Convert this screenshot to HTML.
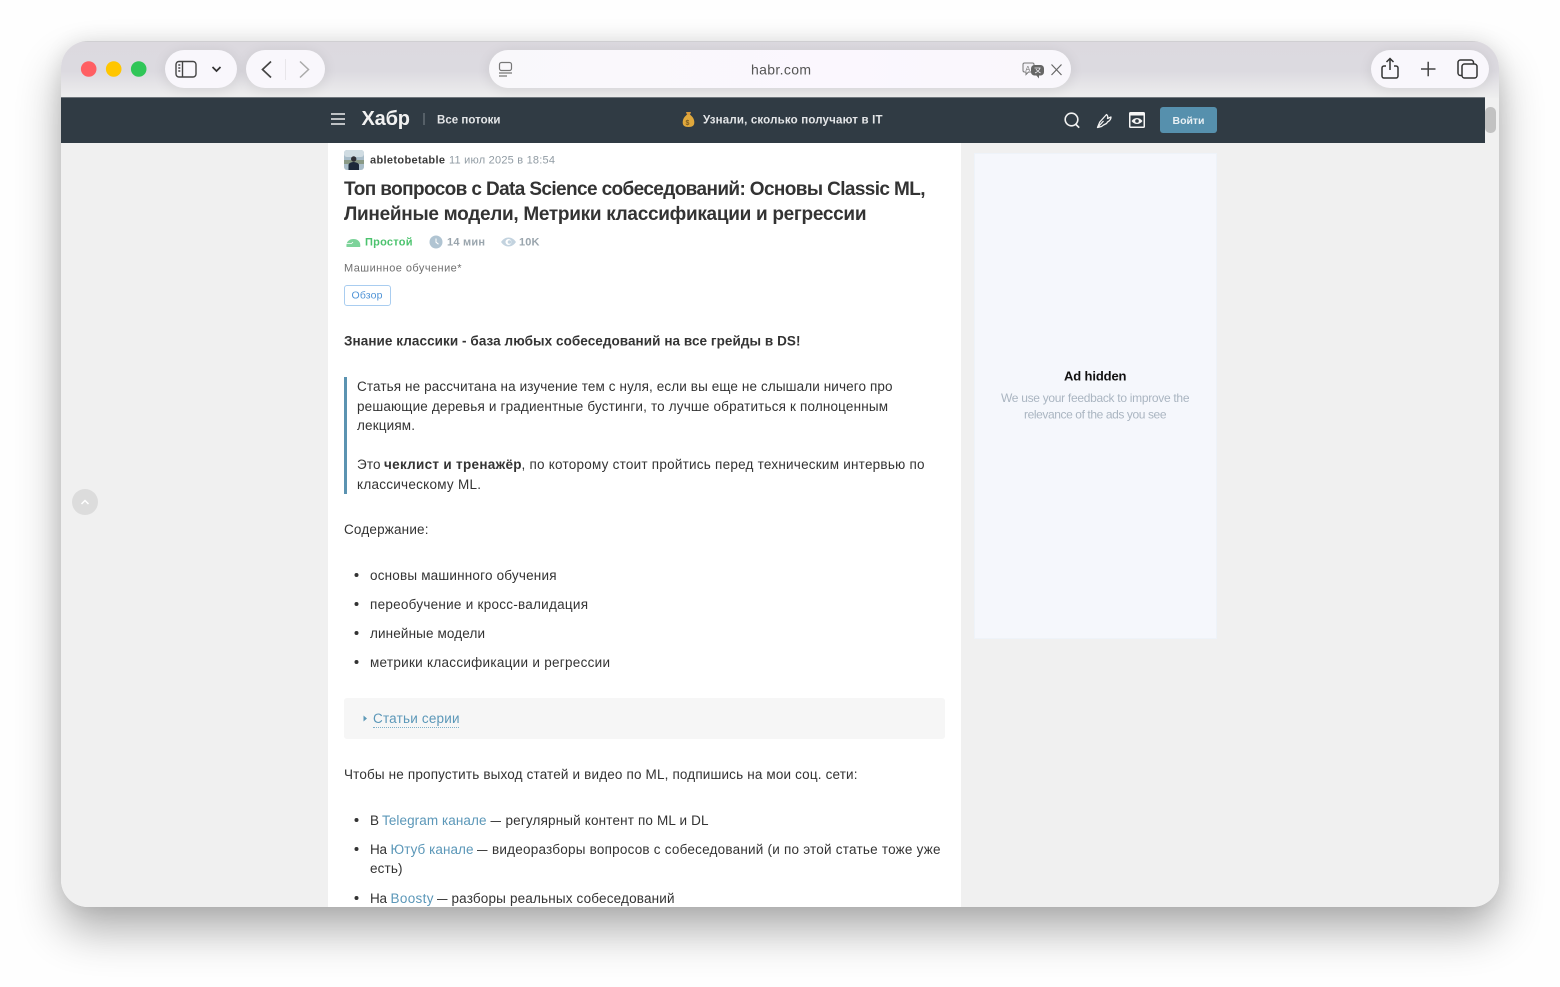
<!DOCTYPE html>
<html lang="ru"><head><meta charset="utf-8"><title>habr.com</title>
<style>
html,body{margin:0;padding:0;width:1560px;height:987px;overflow:hidden;background:#fefefe}
#shadow{position:absolute;left:61px;top:41px;width:1438px;height:866px;border-radius:27px;box-shadow:0 24px 44px rgba(0,0,0,.31),0 0 20px rgba(0,0,0,.09)}
#win{position:absolute;left:61px;top:41px;width:1438px;height:866px;border-radius:27px;overflow:hidden;background:#f0f0f0}
#top{position:absolute;left:0;top:0;width:1438px;height:57px;background:linear-gradient(#dcd9df 0,#dcdae0 52%,#e6e5e8 78%,#eeeeee 100%);border-top:1px solid #d0cfd2;box-sizing:border-box}
#hdr{position:absolute;left:0;top:56px;width:1424px;height:46px;background:#303b44;border-top:1px solid #6f767c;box-sizing:border-box}
#art{position:absolute;left:267px;top:101.500px;width:633px;height:765px;background:#fff}
#ad{position:absolute;left:913px;top:112px;width:243px;height:486px;background:#f5f7fc;border:1px solid #eef3f9;box-sizing:border-box}
.pill{position:absolute;top:9px;height:38px;border-radius:19px;background:#f9f7fc;box-shadow:0 2px 14px rgba(0,0,0,.09)}
svg{position:absolute;left:0;top:0;width:1560px;height:987px}
text{font-family:"Liberation Sans",sans-serif;fill:#333}
.b{font-size:13.5px}
.a{fill:#5b97b8;font-size:13.5px}
.g{fill:#909ba3;font-size:11px}
#t{filter:blur(.35px)}
</style></head><body>
<div id="shadow"></div>
<div id="win">
<div id="top"></div>
<div class="pill" style="left:104px;width:72px"></div>
<div class="pill" style="left:185px;width:79px"></div>
<div class="pill" style="left:428px;width:582px;background:linear-gradient(90deg,#f9f8fb,#fbf7fe 60%,#f9f7fc)"></div>
<div class="pill" style="left:1310px;width:118px"></div>
<div id="hdr"></div>
<div id="art"></div>
<div id="ad"></div>
<div style="position:absolute;left:1424px;top:66px;width:11px;height:26px;border-radius:5px;background:#c2c2c2"></div>
<div style="position:absolute;left:283px;top:657px;width:601px;height:41px;border-radius:3px;background:#f6f6f6"></div>
<div style="position:absolute;left:283px;top:336px;width:3px;height:117px;background:#5b93b1"></div>
<div style="position:absolute;left:283px;top:244px;width:47px;height:21px;border:1px solid #a9cdf0;border-radius:3px;box-sizing:border-box;background:#fff"></div>
<div style="position:absolute;left:312px;top:686px;width:86px;border-top:1px dotted #7fb0c8"></div>
<div style="position:absolute;left:11px;top:448px;width:26px;height:26px;border-radius:50%;background:#dcdcdc"></div>
</div>
<svg id="s" viewBox="0 0 1560 987" xmlns="http://www.w3.org/2000/svg">
<defs><clipPath id="c"><rect x="61" y="41" width="1438" height="866"/></clipPath></defs>
<g id="t" clip-path="url(#c)">
<!-- traffic lights -->
<circle cx="88.700" cy="69" r="7.800" fill="#ff5f63"/><circle cx="113.700" cy="69" r="7.800" fill="#ffc600"/><circle cx="138.700" cy="69" r="7.800" fill="#30c658"/>
<!-- sidebar icon -->
<g fill="none" stroke="#444" stroke-width="1.400"><rect x="176" y="61.500" width="20" height="15.500" rx="3"/><path d="M182.500 61.500V77"/><path d="M178.300 65h2M178.300 68h2M178.300 71h2"/><path d="M212.500 67l4 4 4-4" stroke-width="1.700" stroke="#333"/></g>
<path d="M271 61.500l-8.500 8 8.500 8" fill="none" stroke="#444" stroke-width="1.700"/>
<path d="M300 61.500l8.500 8-8.500 8" fill="none" stroke="#aaa" stroke-width="1.500"/>
<path d="M285.500 59v21" stroke="#e8e6ea" stroke-width="1"/>
<!-- reader -->
<g fill="none" stroke="#777" stroke-width="1.200"><rect x="499.500" y="62.500" width="12" height="8" rx="2"/><path d="M499 73h13M499 76h8"/></g>
<text x="751" y="74.500" font-size="14" style="fill:#555" textLength="60">habr.com</text>
<!-- translate -->
<g><path d="M1024.500 63h8a1.500 1.500 0 0 1 1.500 1.500v6a1.500 1.500 0 0 1-1.500 1.500h-4l-2.500 2.500v-2.500h-1.500a1.500 1.500 0 0 1-1.500-1.500v-6a1.500 1.500 0 0 1 1.500-1.500z" fill="#f4f2f7" stroke="#777" stroke-width="1"/><text x="1025.500" y="71" font-size="7" style="fill:#777">A</text><rect x="1031" y="65" width="13" height="10.500" rx="3.500" fill="#666"/><path d="M1036 75l3 3.500v-3.500z" fill="#666"/><path d="M1034.500 68h6M1040 68c-1 3-3 4-5 5M1036 69c1 2 3 3 4.500 4" stroke="#f4f2f7" stroke-width=".8" fill="none"/></g>
<path d="M1051.500 64.500l10 10.500M1061.500 64.500l-10 10.500" stroke="#666" stroke-width="1.200"/>
<!-- share plus tabs -->
<g fill="none" stroke="#333" stroke-width="1.500"><path d="M1386 66h-2a2 2 0 0 0-2 2v8a2 2 0 0 0 2 2h12a2 2 0 0 0 2-2v-8a2 2 0 0 0-2-2h-2"/><path d="M1390 70V59M1386.500 62l3.500-3.500 3.500 3.500"/><path d="M1421 69h14.500M1428.200 61.800v14.500" stroke="#444"/><path d="M1462 75.500h-1.500a2.500 2.500 0 0 1-2.500-2.500v-10.500a2.500 2.500 0 0 1 2.500-2.500h10.500a2.500 2.500 0 0 1 2.500 2.500v1"/><rect x="1462" y="64" width="15" height="14" rx="2.500"/></g>
<!-- header left -->
<path d="M331 114h14M331 119h14M331 124h14" stroke="#eee" stroke-width="1.600"/>
<text x="361.500" y="125" font-size="20" font-weight="700" style="fill:#f2f2f2" textLength="48.500">Хабр</text>
<path d="M424 113v12" stroke="#7b848b" stroke-width="1"/>
<text x="437" y="123.500" font-size="11.500" font-weight="700" style="fill:#e4e6e8" textLength="63.500">Все потоки</text>
<!-- money bag -->
<path d="M686 112h5l-1 3h-3z" fill="#d99a3a"/><path d="M686.500 115h4c3 2.500 3.800 5 3.800 7.500 0 3-1.800 4.500-5.800 4.500s-5.800-1.500-5.800-4.500c0-2.500.800-5 3.800-7.500z" fill="#e0a83c"/><text x="685.500" y="125" font-size="7" font-weight="700" style="fill:#7a5a20">$</text>
<text x="703" y="123.500" font-size="11.500" font-weight="700" style="fill:#e4e6e8" textLength="179.500">Узнали, сколько получают в IT</text>
<!-- header right -->
<g fill="none" stroke="#f2f2f2"><circle cx="1071.500" cy="119.500" r="6.300" stroke-width="1.600"/><path d="M1076 124.500l3.200 3.200" stroke-width="1.700"/>
<path d="M1097.500 127.500l2.300-5.500 6.700-7.500c1.500 1.300 1.500 2.700 1 4l3.500-1.500c0 2-1.500 4-3.500 5l-1 1.500-3 1.500-2 1.500zM1098.500 126.500l5-5.500" stroke-width="1.300" stroke-linejoin="round"/></g>
<rect x="1129" y="112" width="16" height="16" rx="1.500" fill="#f5f5f5"/><rect x="1130.500" y="115.500" width="13" height="11" fill="#303b44"/><path d="M1131.500 121c3-4 8-4 11 0-3 4-8 4-11 0z" fill="#f5f5f5"/><circle cx="1137" cy="121" r="1.800" fill="#303b44"/>
<rect x="1160" y="107" width="57" height="26" rx="3" fill="#5690ad"/>
<text x="1172.500" y="124" font-size="10.500" font-weight="700" style="fill:#e8f0f4" textLength="32">Войти</text>
<!-- scroll up -->
<path d="M81.500 504l3.500-3.500 3.500 3.500" fill="none" stroke="#fff" stroke-width="1.500"/>
<!-- avatar -->
<rect x="344" y="150" width="20" height="20" rx="3" fill="#a9bdc9"/><rect x="344" y="150" width="20" height="7" rx="3" fill="#d0dce2"/><rect x="344" y="160" width="20" height="4" fill="#8a9a86"/><path d="M348.500 170v-5c0-2 3.500-3 5-3s5.500 1 5.500 3v5z" fill="#1d2a3a"/><circle cx="353.700" cy="159" r="2.700" fill="#2f2f35"/>
<text x="370" y="163.500" font-size="11" font-weight="700" style="fill:#3c3c3c" textLength="75">abletobetable</text>
<text x="449" y="163.500" class="g" textLength="106">11 июл 2025 в 18:54</text>
<text x="344" y="195" font-size="19" font-weight="700" style="fill:#333" textLength="581.500">Топ вопросов с Data Science собеседований: Основы Classic ML,</text>
<text x="344" y="220" font-size="19" font-weight="700" style="fill:#333" textLength="522.500">Линейные модели, Метрики классификации и регрессии</text>
<!-- meta -->
<path d="M346.500 247c-.8-5 2.500-8 7-8s7.500 3 6.700 8z" fill="#7dd39a"/><path d="M346.500 243.500h5l1.500-1.500" stroke="#fff" stroke-width=".8" fill="none"/>
<text x="365" y="245.500" font-size="11" font-weight="700" style="fill:#4cc36e" textLength="47.500">Простой</text>
<circle cx="436" cy="242" r="6.500" fill="#b0c4d2"/><path d="M436 238.500v3.700l2.500 2" stroke="#fff" stroke-width="1" fill="none"/>
<text x="447" y="245.500" font-size="11" font-weight="700" style="fill:#9aa5ad" textLength="38">14 мин</text>
<path d="M501 242c4-6 11-6 15 0-4 6-11 6-15 0z" fill="#c3d3df"/><circle cx="508.500" cy="242" r="3" fill="#fff"/><circle cx="509.500" cy="242" r="1.800" fill="#c3d3df"/>
<text x="519" y="245.500" font-size="11" font-weight="700" style="fill:#9aa5ad" textLength="20.500">10K</text>
<text x="344" y="271.500" font-size="11" style="fill:#6f6f6f" textLength="117.500">Машинное обучение*</text>
<text x="351.500" y="298.500" font-size="10.500" style="fill:#4f93d6" textLength="31">Обзор</text>
<!-- body -->
<text x="344" y="345.500" font-size="13.500" font-weight="700" textLength="456.500">Знание классики - база любых собеседований на все грейды в DS!</text>
<text x="357" y="391" class="b" textLength="535.500">Статья не рассчитана на изучение тем с нуля, если вы еще не слышали ничего про</text>
<text x="357" y="411" class="b" textLength="531">решающие деревья и градиентные бустинги, то лучше обратиться к полноценным</text>
<text x="357" y="430" class="b" textLength="58">лекциям.</text>
<text x="357" y="469" class="b" textLength="23.500">Это</text>
<text x="384" y="469" class="b" font-weight="700" textLength="137.500">чеклист и тренажёр</text>
<text x="521.500" y="469" class="b" textLength="403">, по которому стоит пройтись перед техническим интервью по</text>
<text x="357" y="489" class="b" textLength="124">классическому ML.</text>
<text x="344" y="534" class="b" textLength="84.500">Содержание:</text>
<g fill="#333"><circle cx="356.500" cy="575" r="2"/><circle cx="356.500" cy="604" r="2"/><circle cx="356.500" cy="633" r="2"/><circle cx="356.500" cy="662" r="2"/><circle cx="356.500" cy="820" r="2"/><circle cx="356.500" cy="849" r="2"/><circle cx="356.500" cy="898" r="2"/></g>
<text x="370" y="580" class="b" textLength="186.500">основы машинного обучения</text>
<text x="370" y="609" class="b" textLength="218">переобучение и кросс-валидация</text>
<text x="370" y="638" class="b" textLength="115">линейные модели</text>
<text x="370" y="667" class="b" textLength="240">метрики классификации и регрессии</text>
<path d="M363.500 715.500l3.500 3-3.500 3z" fill="#5f9ab8"/>
<text x="373" y="723" class="a" textLength="86.500">Статьи серии</text>
<text x="344" y="779" class="b" textLength="513.500">Чтобы не пропустить выход статей и видео по ML, подпишись на мои соц. сети:</text>
<text x="370" y="825" class="b" textLength="9">В</text>
<text x="382" y="825" class="a" textLength="104.500">Telegram канале</text>
<text x="490.500" y="825" class="b" textLength="10.500" lengthAdjust="spacingAndGlyphs">—</text>
<text x="505.500" y="825" class="b" textLength="203">регулярный контент по ML и DL</text>
<text x="370" y="854" class="b" textLength="17">На</text>
<text x="390.500" y="854" class="a" textLength="83">Ютуб канале</text>
<text x="477" y="854" class="b" textLength="10.500" lengthAdjust="spacingAndGlyphs">—</text>
<text x="492" y="854" class="b" textLength="448.500">видеоразборы вопросов с собеседований (и по этой статье тоже уже</text>
<text x="370" y="873" class="b" textLength="32.500">есть)</text>
<text x="370" y="903" class="b" textLength="17">На</text>
<text x="390.500" y="903" class="a" textLength="43">Boosty</text>
<text x="437" y="903" class="b" textLength="10.500" lengthAdjust="spacingAndGlyphs">—</text>
<text x="451.500" y="903" class="b" textLength="223">разборы реальных собеседований</text>
<!-- ad -->
<text x="1064" y="380.500" font-size="13" font-weight="700" style="fill:#111" textLength="62.500">Ad hidden</text>
<text x="1001" y="402" font-size="12" style="fill:#aab5c1" textLength="188.500">We use your feedback to improve the</text>
<text x="1024" y="418.500" font-size="12" style="fill:#aab5c1" textLength="142.500">relevance of the ads you see</text>
</g>
</svg>
</body></html>
